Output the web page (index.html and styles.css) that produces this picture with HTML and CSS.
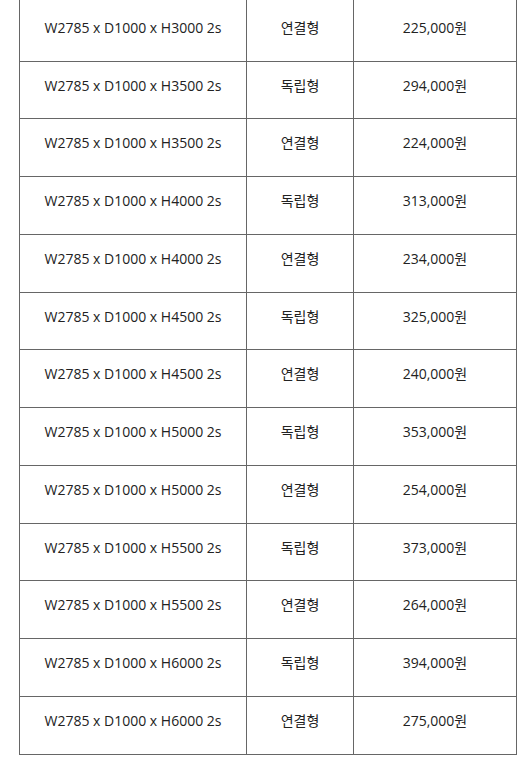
FILE: index.html
```html
<!DOCTYPE html>
<html lang="ko">
<head>
<meta charset="utf-8">
<title>가격표</title>
<link rel="stylesheet" href="styles.css">
</head>
<body>
<table class="price-table">
  <colgroup>
    <col class="c-size">
    <col class="c-type">
    <col class="c-price">
  </colgroup>
  <tbody>
    <tr class="first"><td>W2785 x D1000 x H3000 2s</td><td>연결형</td><td>225,000원</td></tr>
    <tr><td>W2785 x D1000 x H3500 2s</td><td>독립형</td><td>294,000원</td></tr>
    <tr><td>W2785 x D1000 x H3500 2s</td><td>연결형</td><td>224,000원</td></tr>
    <tr><td>W2785 x D1000 x H4000 2s</td><td>독립형</td><td>313,000원</td></tr>
    <tr><td>W2785 x D1000 x H4000 2s</td><td>연결형</td><td>234,000원</td></tr>
    <tr><td>W2785 x D1000 x H4500 2s</td><td>독립형</td><td>325,000원</td></tr>
    <tr><td>W2785 x D1000 x H4500 2s</td><td>연결형</td><td>240,000원</td></tr>
    <tr><td>W2785 x D1000 x H5000 2s</td><td>독립형</td><td>353,000원</td></tr>
    <tr><td>W2785 x D1000 x H5000 2s</td><td>연결형</td><td>254,000원</td></tr>
    <tr><td>W2785 x D1000 x H5500 2s</td><td>독립형</td><td>373,000원</td></tr>
    <tr><td>W2785 x D1000 x H5500 2s</td><td>연결형</td><td>264,000원</td></tr>
    <tr><td>W2785 x D1000 x H6000 2s</td><td>독립형</td><td>394,000원</td></tr>
    <tr><td>W2785 x D1000 x H6000 2s</td><td>연결형</td><td>275,000원</td></tr>
  </tbody>
</table>
</body>
</html>
```

FILE: styles.css
```css
html, body {
  margin: 0;
  padding: 0;
  background: #fff;
}
body {
  font-family: "Open Sans", "Noto Sans CJK KR", sans-serif;
  font-size: 14px;
  color: #222;
}
.price-table {
  margin-left: 19px;
  width: 497px;
  table-layout: fixed;
  border-collapse: collapse;
}
.c-size { width: 227px; }
.c-type { width: 107px; }
.c-price { width: 163px; }
.price-table td {
  border: 1px solid #666;
  text-align: center;
  vertical-align: top;
  height: 57.75px;
  padding: 14px 0 0;
  line-height: 20px;
  box-sizing: border-box;
}
.price-table tr.first td {
  border-top: none;
  height: 61px;
  padding-top: 18px;
}
```
